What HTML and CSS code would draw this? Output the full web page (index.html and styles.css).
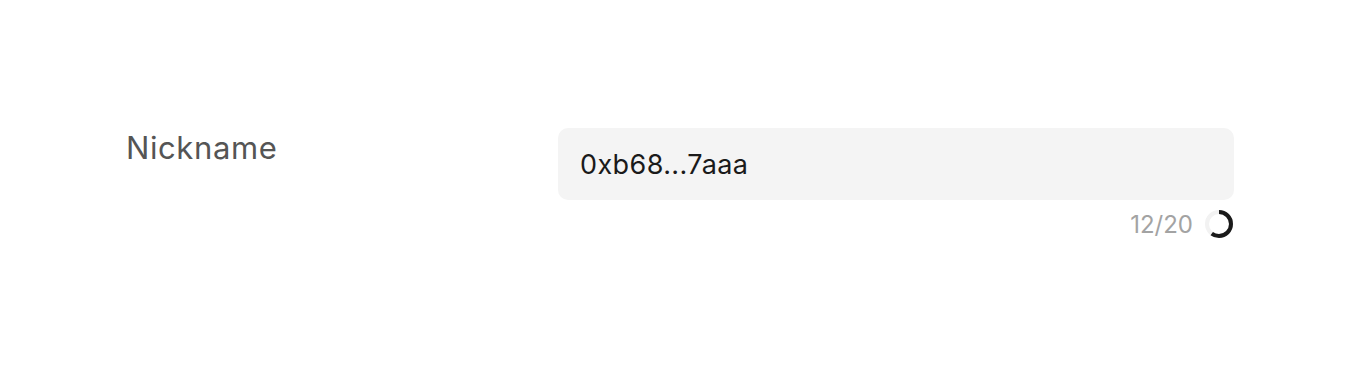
FILE: index.html
```html
<!DOCTYPE html>
<html lang="en">
<head>
    <meta charset="UTF-8">
    <meta name="viewport" content="width=device-width, initial-scale=1.0">
    <title>Nickname</title>
    <link rel="stylesheet" href="styles.css">
</head>
<body>
    <div class="form-row">
        <label class="form-label" for="nickname">Nickname</label>
        <div class="form-field">
            <input id="nickname" class="text-input" type="text" value="0xb68...7aaa">
            <div class="field-meta">
                <span class="char-count">12/20</span>
                <svg class="count-ring" width="30" height="30" viewBox="0 0 30 30">
                    <circle cx="15" cy="15" r="12" fill="none" stroke="#f2f2f2" stroke-width="4"/>
                    <circle cx="15" cy="15" r="12" fill="none" stroke="#1a1a1a" stroke-width="4"
                        stroke-dasharray="45.24 75.4" transform="rotate(-90 15 15)"/>
                </svg>
            </div>
        </div>
    </div>
</body>
</html>
```

FILE: styles.css
```css
body {
    margin: 0;
    background: #ffffff;
    font-family: Inter, "Noto Sans", sans-serif;
}

.form-row {
    display: flex;
    padding: 128px 0 0 126px;
    width: 1108px;
}

.form-label {
    width: 432px;
    flex-shrink: 0;
    font-size: 31px;
    line-height: 40px;
    letter-spacing: 0.6px;
    color: #555555;
}

.form-field {
    flex: 1;
}

.text-input {
    display: block;
    box-sizing: border-box;
    width: 100%;
    height: 72px;
    padding: 0 22px;
    border: none;
    border-radius: 10px;
    background: #f4f4f4;
    font-family: Inter, "Noto Sans", sans-serif;
    font-size: 27px;
    letter-spacing: 0.4px;
    color: #1a1a1a;
    outline: none;
}

.field-meta {
    display: flex;
    justify-content: flex-end;
    align-items: center;
    gap: 11px;
    margin-top: 9px;
}

.char-count {
    font-size: 24px;
    color: #a3a3a3;
}

.count-ring {
    display: block;
}
```
